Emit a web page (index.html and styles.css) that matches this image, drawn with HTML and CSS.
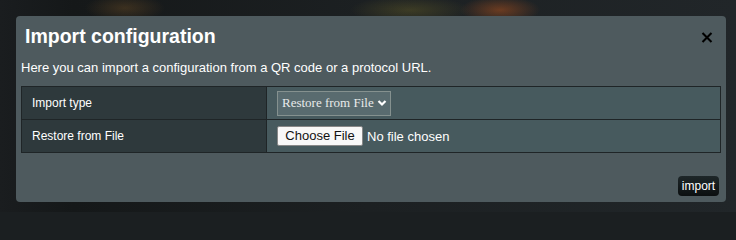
FILE: index.html
```html
<!DOCTYPE html>
<html>
<head>
<meta charset="utf-8">
<link rel="stylesheet" href="styles.css">
</head>
<body>
<div class="backdrop">
  <div class="modal">
    <div class="modal-header">
      <h2 class="modal-title">Import configuration</h2>
      <button class="close" aria-label="Close">
        <svg width="12" height="11" viewBox="0 0 12 11"><path d="M1.5 1 L10.5 10 M10.5 1 L1.5 10" stroke="#000" stroke-width="2.1" stroke-linecap="butt"/></svg>
      </button>
    </div>
    <p class="desc">Here you can import a configuration from a QR code or a protocol URL.</p>
    <table class="form-table">
      <tr>
        <th>Import type</th>
        <td>
          <div class="select">
            <span>Restore from File</span>
            <svg width="10" height="8" viewBox="0 0 10 8"><path d="M1.5 2 L5 5.5 L8.5 2" fill="none" stroke="#fff" stroke-width="2.2"/></svg>
          </div>
        </td>
      </tr>
      <tr>
        <th>Restore from File</th>
        <td>
          <div class="file">
            <span class="file-btn">Choose File</span>
            <span class="file-name">No file chosen</span>
          </div>
        </td>
      </tr>
    </table>
    <div class="footer">
      <button class="import-btn">import</button>
    </div>
  </div>
</div>
</body>
</html>
```
FILE: styles.css
```css
html {
  background: #1b1f21;
}
html, body {
  margin: 0;
  padding: 0;
}
body {
  height: 212px;
  overflow: hidden;
  background-color: #1b1f21;
  background-image:
    radial-gradient(ellipse 40px 14px at 125px 8px, rgba(130,90,40,0.35), transparent),
    radial-gradient(ellipse 60px 14px at 410px 10px, rgba(120,110,40,0.35), transparent),
    radial-gradient(ellipse 40px 14px at 500px 10px, rgba(170,80,30,0.55), transparent),
    linear-gradient(90deg, #1a1d1f 0%, #151819 10%, #1c2022 50%, #212629 100%);
  background-repeat: no-repeat;
  font-family: "Liberation Sans", Arial, sans-serif;
}
.backdrop {
  padding: 16px 10px 0 16px;
}
.modal {
  width: 710px;
  height: 186px;
  background: #4e5a5e;
  border-radius: 4px;
  box-sizing: border-box;
  padding: 0 5px;
  display: flex;
  flex-direction: column;
}
.modal-header {
  display: flex;
  align-items: center;
  justify-content: space-between;
  padding: 7px 8px 0 4px;
  height: 34px;
  box-sizing: border-box;
}
.modal-title {
  margin: 0;
  font-size: 19.5px;
  font-weight: bold;
  color: #fff;
}
.close {
  background: none;
  border: 0;
  padding: 0;
  margin-top: 2px;
  display: flex;
  cursor: pointer;
}
.desc {
  margin: 10px 0 0 0;
  color: #fff;
  font-size: 13px;
  line-height: 15px;
}
.form-table {
  margin-top: 11px;
  width: 700px;
  border-collapse: collapse;
  border: 1px solid #1f2527;
}
.form-table th,
.form-table td {
  border: 1px solid #1f2527;
  height: 33px;
  padding: 0;
  box-sizing: border-box;
}
.form-table th {
  width: 245px;
  background: #2e393c;
  color: #fff;
  font-weight: normal;
  font-size: 12px;
  text-align: left;
  padding-left: 10px;
}
.form-table td {
  background: #475a5e;
  padding-left: 10px;
}
.select {
  display: inline-flex;
  align-items: center;
  gap: 3px;
  height: 25px;
  width: 114px;
  box-sizing: border-box;
  border: 1px solid #85918f;
  background: #596b6f;
  color: #e8eaea;
  font-family: "Liberation Serif", "Times New Roman", serif;
  font-size: 13px;
  padding: 0 3px 0 4px;
}
.file {
  display: flex;
  align-items: center;
  gap: 4px;
}
.file-btn {
  display: inline-block;
  background: #f8f8f8;
  color: #111;
  border: 1px solid #888;
  border-radius: 2px;
  font-size: 13px;
  height: 20px;
  line-height: 18px;
  box-sizing: border-box;
  width: 86px;
  text-align: center;
}
.file-name {
  color: #fff;
  font-size: 13px;
}
.footer {
  display: flex;
  justify-content: flex-end;
  margin-top: auto;
  padding-bottom: 6px;
  padding-right: 2px;
}
.import-btn {
  background: linear-gradient(#1e2729, #0b0f10);
  color: #fff;
  border: 0;
  border-radius: 4px;
  font-family: "Liberation Sans", Arial, sans-serif;
  font-size: 12px;
  height: 20px;
  width: 41px;
  padding: 0;
}
```
